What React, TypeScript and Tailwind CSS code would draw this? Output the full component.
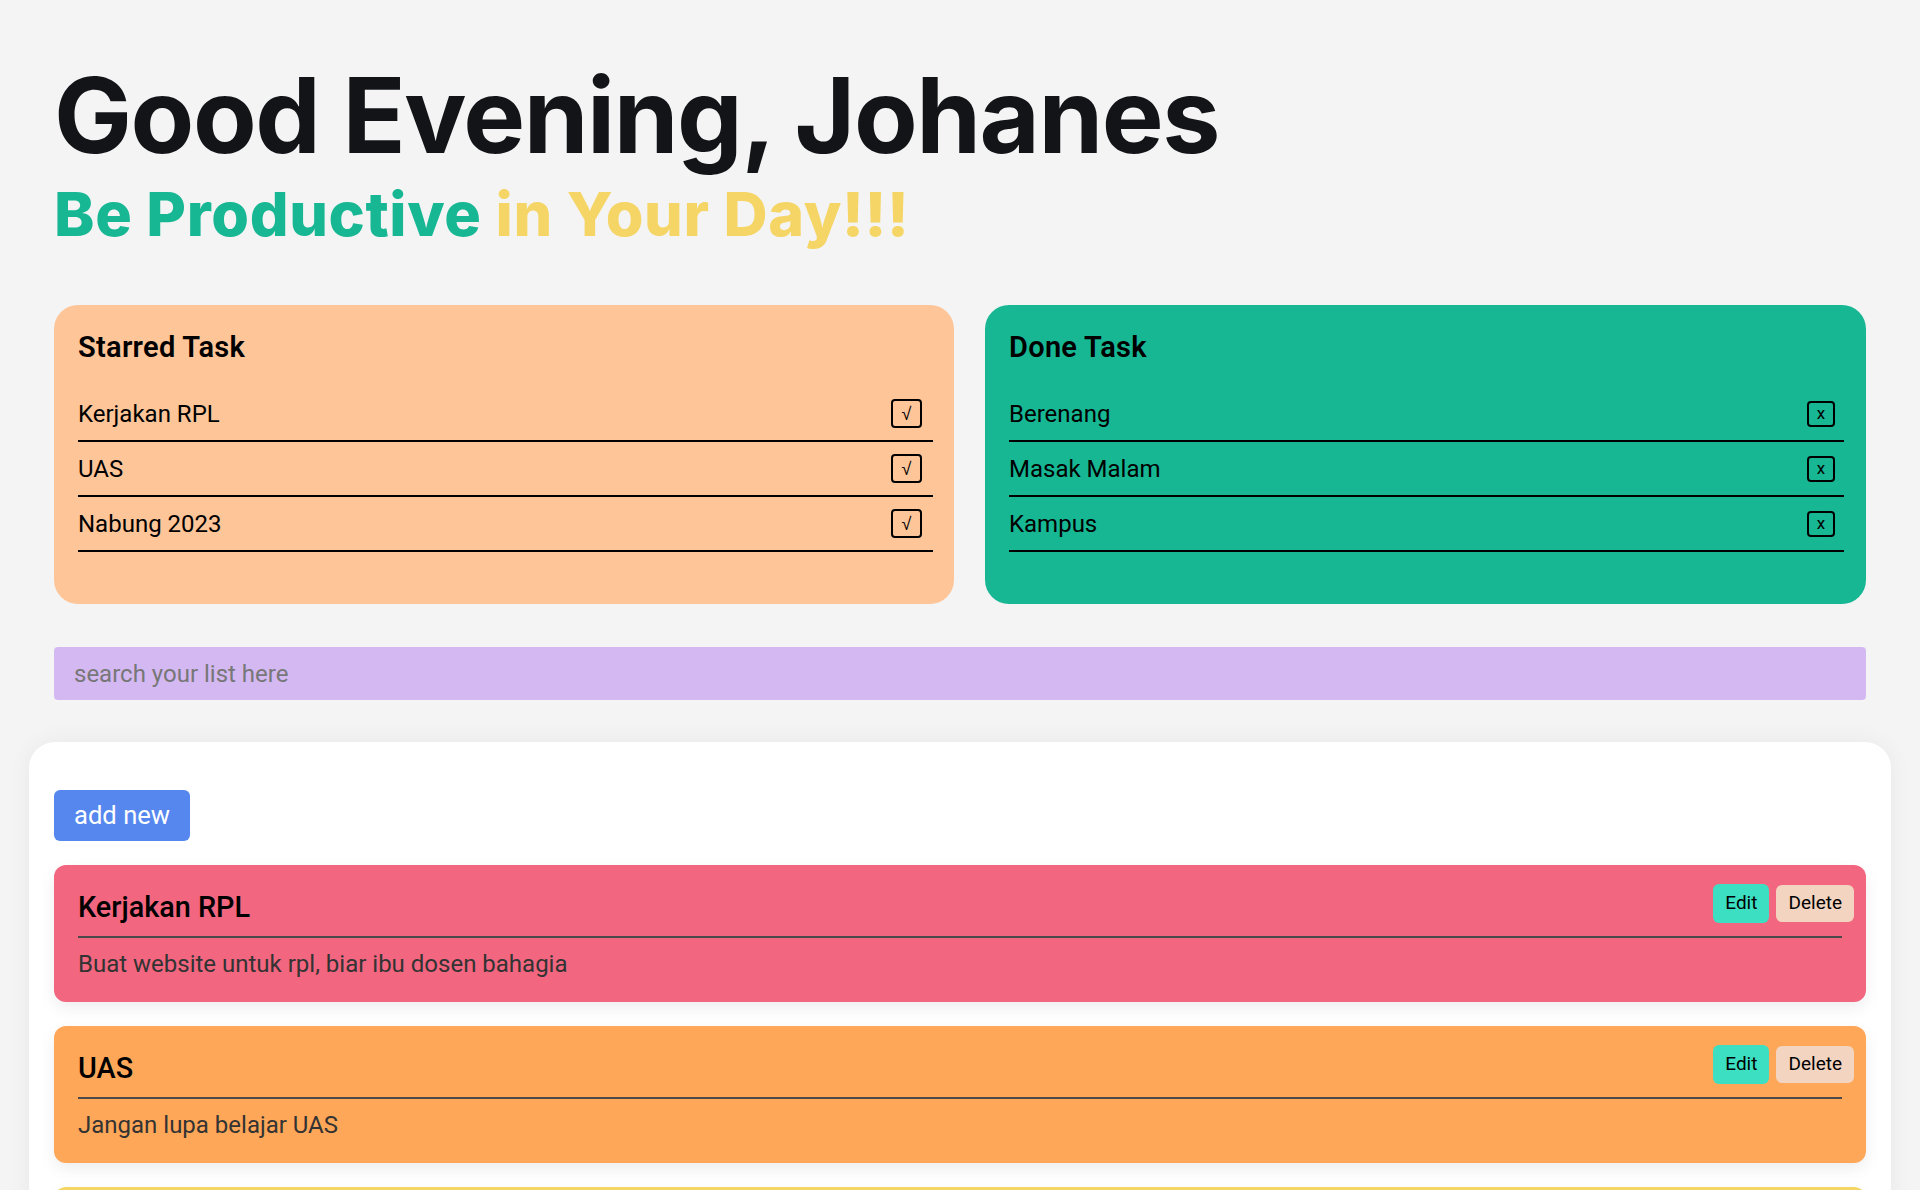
import React from "react";

const starred = ["Kerjakan RPL", "UAS", "Nabung 2023"];
const done = ["Berenang", "Masak Malam", "Kampus"];

const tasks = [
  { title: "Kerjakan RPL", desc: "Buat website untuk rpl, biar ibu dosen bahagia", bg: "bg-[#f2667f]" },
  { title: "UAS", desc: "Jangan lupa belajar UAS", bg: "bg-[#ffa758]" },
  { title: "Nabung 2023", desc: "Nabung buat masa depan", bg: "bg-[#f5d664]" },
];

export default function App() {
  return (
    <div className="min-h-screen bg-[#f4f4f4] font-['Roboto',sans-serif] text-black">
      <div className="px-[54px] pt-[63px]">
        <h1 className="font-['Inter',sans-serif] text-[104px] leading-[104px] font-bold tracking-[-0.014em] text-[#131418]">
          Good Evening, Johanes
        </h1>
        <h2 className="mt-[17px] font-['Inter',sans-serif] text-[61px] leading-[60px] font-extrabold tracking-[0.01em]">
          <span className="text-[#17b794]">Be Productive</span>{" "}
          <span className="text-[#f5d565]">in Your Day!!!</span>
        </h2>

        <div className="mt-[61px] grid grid-cols-[900px_881px] gap-[31px]">
          <div className="rounded-3xl bg-[#fdc598] pl-6 pr-[21px] pt-[25px] pb-[52px]">
            <h3 className="text-[29px] leading-[34px] font-semibold tracking-[0.01em]">Starred Task</h3>
            <ul className="mt-[23px]">
              {starred.map((t) => (
                <li key={t} className="flex h-[55px] items-center justify-between border-b-2 border-black">
                  <span className="text-[24px] leading-[36px]">{t}</span>
                  <button className="mr-[11px] flex h-[29px] w-[31px] items-center justify-center rounded-[4px] border-2 border-black text-[18px] leading-none font-['DejaVu_Sans',sans-serif] font-light">
                    √
                  </button>
                </li>
              ))}
            </ul>
          </div>
          <div className="rounded-3xl bg-[#17b794] pl-6 pr-[22px] pt-[25px] pb-[52px]">
            <h3 className="text-[29px] leading-[34px] font-semibold tracking-[0.01em]">Done Task</h3>
            <ul className="mt-[23px]">
              {done.map((t) => (
                <li key={t} className="flex h-[55px] items-center justify-between border-b-2 border-black">
                  <span className="text-[24px] leading-[36px]">{t}</span>
                  <button className="mr-[9px] flex h-[26px] w-[28px] items-center justify-center rounded-[4px] border-2 border-black text-[17px] leading-none">
                    x
                  </button>
                </li>
              ))}
            </ul>
          </div>
        </div>

        <input
          type="text"
          placeholder="search your list here"
          className="mt-[43px] block h-[53px] w-full rounded-[4px] bg-[#d4b8f2] px-5 text-[24px] outline-none placeholder:text-[#777777]"
        />
      </div>

      <div className="mx-[29px] mt-[42px] rounded-t-[26px] bg-white px-[25px] pt-[48px] pb-10 shadow-[0_0_24px_rgba(0,0,0,0.05)]">
        <button className="flex h-[51px] items-center rounded-[6px] bg-[#5587ee] px-5 text-[25.6px] text-white">
          add new
        </button>
        <div className="mt-6 flex flex-col gap-6">
          {tasks.map((t) => (
            <div
              key={t.title}
              className={`relative rounded-xl ${t.bg} px-6 pt-[25px] pb-[20px] shadow-[0_6px_16px_rgba(0,0,0,0.07)]`}
            >
              <h4 className="border-b-2 border-[#4a4a4a] pb-3 text-[28.8px] leading-[34px] font-medium">{t.title}</h4>
              <p className="mt-2 text-[24px] leading-[36px] text-[#333333]">{t.desc}</p>
              <div className="absolute right-[12px] top-[19px] flex items-center gap-[7px]">
                <button className="flex h-[39px] items-center rounded-[6px] bg-[#3ddfc3] px-3 text-[19px]">Edit</button>
                <button className="flex h-[37px] items-center rounded-[6px] bg-[#f2d4c1] px-3 text-[19px]">Delete</button>
              </div>
            </div>
          ))}
        </div>
      </div>
    </div>
  );
}
